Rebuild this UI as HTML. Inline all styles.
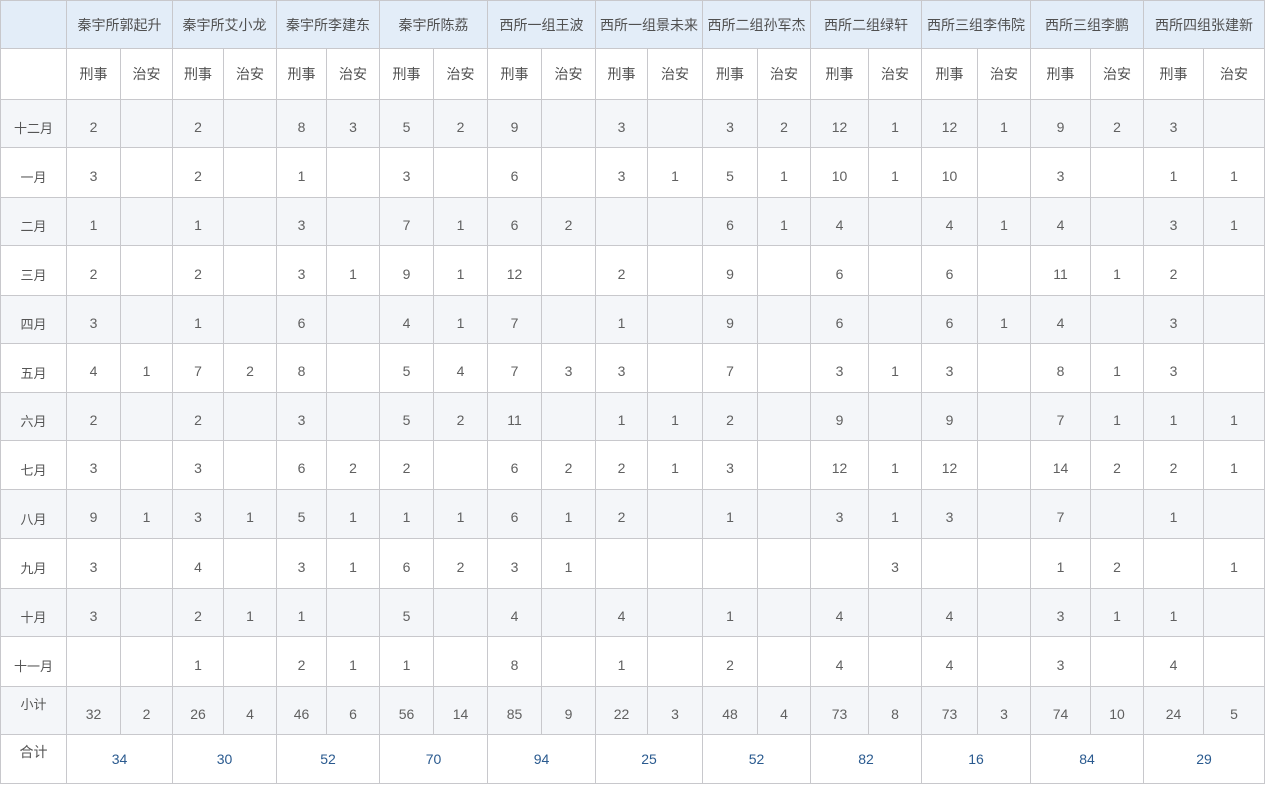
<!DOCTYPE html>
<html><head><meta charset="utf-8"><style>
body{margin:0;background:#fff;width:1265px;height:785px;overflow:hidden}
table{border-collapse:collapse;table-layout:fixed;font-family:"Liberation Sans","Noto Sans CJK SC",sans-serif;color:#606060;font-size:14px;margin:0}
td{border:1px solid #c8c8cc;text-align:center;padding:6px 0 0 0;vertical-align:middle;white-space:nowrap;overflow:hidden}
tr.h td{background:#e3edf8;font-size:14px;color:#505050;padding:0}
tr.s td{font-size:14px;color:#505050;padding:0}
tr.o td{background:#f4f6f9}
td.m{font-size:13px;padding:8px 0 0 0;color:#555}
tr.t td{color:#2a5a8f;font-size:14px;padding-top:0}
tr.t td.m{padding:0 0 14px 0;color:#555}
tr.x td.m{padding:0 0 14px 0}
</style></head><body>
<table>
<colgroup><col style="width:66px"><col style="width:54px"><col style="width:52px"><col style="width:51px"><col style="width:53px"><col style="width:50px"><col style="width:53px"><col style="width:54px"><col style="width:54px"><col style="width:54px"><col style="width:54px"><col style="width:52px"><col style="width:55px"><col style="width:55px"><col style="width:53px"><col style="width:58px"><col style="width:53px"><col style="width:56px"><col style="width:53px"><col style="width:60px"><col style="width:53px"><col style="width:60px"><col style="width:61px"></colgroup>
<tr class="h" style="height:48px"><td></td><td colspan="2">秦宇所郭起升</td><td colspan="2">秦宇所艾小龙</td><td colspan="2">秦宇所李建东</td><td colspan="2">秦宇所陈荔</td><td colspan="2">西所一组王波</td><td colspan="2">西所一组景未来</td><td colspan="2">西所二组孙军杰</td><td colspan="2">西所二组绿轩</td><td colspan="2">西所三组李伟院</td><td colspan="2">西所三组李鹏</td><td colspan="2">西所四组张建新</td></tr>
<tr class="s" style="height:51px"><td></td><td>刑事</td><td>治安</td><td>刑事</td><td>治安</td><td>刑事</td><td>治安</td><td>刑事</td><td>治安</td><td>刑事</td><td>治安</td><td>刑事</td><td>治安</td><td>刑事</td><td>治安</td><td>刑事</td><td>治安</td><td>刑事</td><td>治安</td><td>刑事</td><td>治安</td><td>刑事</td><td>治安</td></tr>
<tr class="o" style="height:48px"><td class="m">十二月</td><td>2</td><td></td><td>2</td><td></td><td>8</td><td>3</td><td>5</td><td>2</td><td>9</td><td></td><td>3</td><td></td><td>3</td><td>2</td><td>12</td><td>1</td><td>12</td><td>1</td><td>9</td><td>2</td><td>3</td><td></td></tr>
<tr style="height:50px"><td class="m">一月</td><td>3</td><td></td><td>2</td><td></td><td>1</td><td></td><td>3</td><td></td><td>6</td><td></td><td>3</td><td>1</td><td>5</td><td>1</td><td>10</td><td>1</td><td>10</td><td></td><td>3</td><td></td><td>1</td><td>1</td></tr>
<tr class="o" style="height:48px"><td class="m">二月</td><td>1</td><td></td><td>1</td><td></td><td>3</td><td></td><td>7</td><td>1</td><td>6</td><td>2</td><td></td><td></td><td>6</td><td>1</td><td>4</td><td></td><td>4</td><td>1</td><td>4</td><td></td><td>3</td><td>1</td></tr>
<tr style="height:50px"><td class="m">三月</td><td>2</td><td></td><td>2</td><td></td><td>3</td><td>1</td><td>9</td><td>1</td><td>12</td><td></td><td>2</td><td></td><td>9</td><td></td><td>6</td><td></td><td>6</td><td></td><td>11</td><td>1</td><td>2</td><td></td></tr>
<tr class="o" style="height:48px"><td class="m">四月</td><td>3</td><td></td><td>1</td><td></td><td>6</td><td></td><td>4</td><td>1</td><td>7</td><td></td><td>1</td><td></td><td>9</td><td></td><td>6</td><td></td><td>6</td><td>1</td><td>4</td><td></td><td>3</td><td></td></tr>
<tr style="height:49px"><td class="m">五月</td><td>4</td><td>1</td><td>7</td><td>2</td><td>8</td><td></td><td>5</td><td>4</td><td>7</td><td>3</td><td>3</td><td></td><td>7</td><td></td><td>3</td><td>1</td><td>3</td><td></td><td>8</td><td>1</td><td>3</td><td></td></tr>
<tr class="o" style="height:48px"><td class="m">六月</td><td>2</td><td></td><td>2</td><td></td><td>3</td><td></td><td>5</td><td>2</td><td>11</td><td></td><td>1</td><td>1</td><td>2</td><td></td><td>9</td><td></td><td>9</td><td></td><td>7</td><td>1</td><td>1</td><td>1</td></tr>
<tr style="height:49px"><td class="m">七月</td><td>3</td><td></td><td>3</td><td></td><td>6</td><td>2</td><td>2</td><td></td><td>6</td><td>2</td><td>2</td><td>1</td><td>3</td><td></td><td>12</td><td>1</td><td>12</td><td></td><td>14</td><td>2</td><td>2</td><td>1</td></tr>
<tr class="o" style="height:49px"><td class="m">八月</td><td>9</td><td>1</td><td>3</td><td>1</td><td>5</td><td>1</td><td>1</td><td>1</td><td>6</td><td>1</td><td>2</td><td></td><td>1</td><td></td><td>3</td><td>1</td><td>3</td><td></td><td>7</td><td></td><td>1</td><td></td></tr>
<tr style="height:50px"><td class="m">九月</td><td>3</td><td></td><td>4</td><td></td><td>3</td><td>1</td><td>6</td><td>2</td><td>3</td><td>1</td><td></td><td></td><td></td><td></td><td></td><td>3</td><td></td><td></td><td>1</td><td>2</td><td></td><td>1</td></tr>
<tr class="o" style="height:48px"><td class="m">十月</td><td>3</td><td></td><td>2</td><td>1</td><td>1</td><td></td><td>5</td><td></td><td>4</td><td></td><td>4</td><td></td><td>1</td><td></td><td>4</td><td></td><td>4</td><td></td><td>3</td><td>1</td><td>1</td><td></td></tr>
<tr style="height:50px"><td class="m">十一月</td><td></td><td></td><td>1</td><td></td><td>2</td><td>1</td><td>1</td><td></td><td>8</td><td></td><td>1</td><td></td><td>2</td><td></td><td>4</td><td></td><td>4</td><td></td><td>3</td><td></td><td>4</td><td></td></tr>
<tr class="o x" style="height:48px"><td class="m">小计</td><td>32</td><td>2</td><td>26</td><td>4</td><td>46</td><td>6</td><td>56</td><td>14</td><td>85</td><td>9</td><td>22</td><td>3</td><td>48</td><td>4</td><td>73</td><td>8</td><td>73</td><td>3</td><td>74</td><td>10</td><td>24</td><td>5</td></tr>
<tr class="t" style="height:49px"><td class="m">合计</td><td colspan="2">34</td><td colspan="2">30</td><td colspan="2">52</td><td colspan="2">70</td><td colspan="2">94</td><td colspan="2">25</td><td colspan="2">52</td><td colspan="2">82</td><td colspan="2">16</td><td colspan="2">84</td><td colspan="2">29</td></tr>
</table>
</body></html>
